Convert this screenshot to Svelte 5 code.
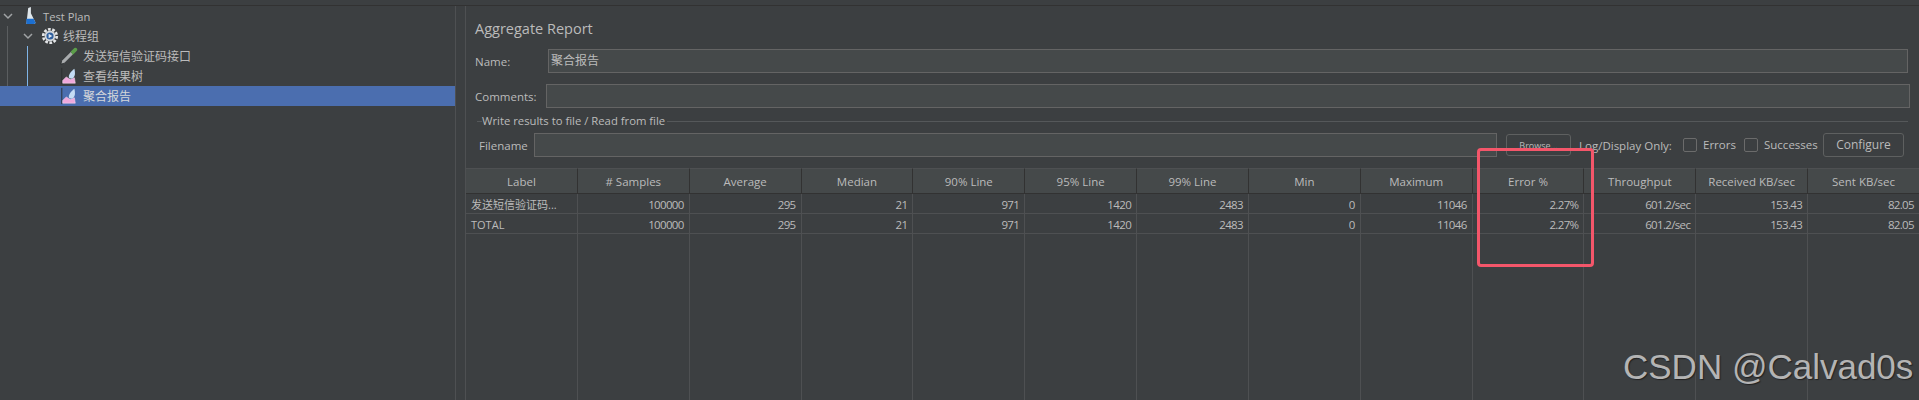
<script>
  const columns = ['Label', '# Samples', 'Average', 'Median', '90% Line', '95% Line', '99% Line', 'Min', 'Maximum', 'Error %', 'Throughput', 'Received KB/sec', 'Sent KB/sec']
  const rows = [
    ['发送短信验证码...', '100000', '295', '21', '971', '1420', '2483', '0', '11046', '2.27%', '601.2/sec', '153.43', '82.05'],
    ['TOTAL', '100000', '295', '21', '971', '1420', '2483', '0', '11046', '2.27%', '601.2/sec', '153.43', '82.05']
  ]
  const blank = Array(13).fill('')
</script>

<div class="app">
  <div class="topline"></div>
  <div class="main">
    <aside class="tree">
      <div class="guide g1"></div>
      <div class="guide g2"></div>
      <div class="node root">
        <svg class="chev" viewBox="0 0 10 10"><path d="M1 3l4 4 4-4" /></svg>
        <svg class="icon" viewBox="0 0 16 20">
          <path d="M6 1l3-1v7l5 10q.5 2-2 2H4q-2.500-2-2L6 7z" fill="#dfe6ea" />
          <path d="M4 13h8l2 4q.5 2-2 2H4q-2.500-2-2z" fill="#1c6fd0" />
        </svg>
        <span class="latin">Test Plan</span>
      </div>
      <div class="node lvl1">
        <svg class="chev" viewBox="0 0 10 10"><path d="M1 3l4 4 4-4" /></svg>
        <svg class="icon gear" viewBox="0 0 20 20">
          <circle cx="10" cy="10" r="7.500" fill="none" stroke="#e4e6e8" stroke-width="3" stroke-dasharray="3 1.700" />
          <circle cx="10" cy="10" r="6" fill="#d4d8dc" />
          <circle cx="10" cy="10" r="4" fill="#2f5f9e" />
          <path d="M8.500 7.500l4 2.500-4 2.500z" fill="#dfe8f2" />
        </svg>
        <span>线程组</span>
      </div>
      <div class="node lvl2">
        <svg class="icon" viewBox="0 0 20 20">
          <path d="M1 19l1-4L12 5l3 3L5 18z" fill="#a9acae" stroke="#26282a" stroke-width=".8" />
          <path d="M12 5l4-4q2-.500 3 1t-1 3l-4 4z" fill="#5c9e4a" />
        </svg>
        <span>发送短信验证码接口</span>
      </div>
      <div class="node lvl2">
        <svg class="icon" viewBox="0 0 20 20">
          <path d="M2 1v18" stroke="#2a2c2e" fill="none" />
          <path d="M3 18v-3l4-4 3 2 2 1 4-2 1 6z" fill="#f0a8dc" stroke="#f8d8ee" stroke-width=".6" />
          <path d="M10 12c-1-3 2-7 6-10 1 4 1 8-1 10-2 1.500-4 1-5 0z" fill="#c4dcf5" />
        </svg>
        <span>查看结果树</span>
      </div>
      <div class="node lvl2 selected">
        <svg class="icon" viewBox="0 0 20 20">
          <path d="M2 1v18" stroke="#2a2c2e" fill="none" />
          <path d="M3 18v-3l4-4 3 2 2 1 4-2 1 6z" fill="#f0a8dc" stroke="#f8d8ee" stroke-width=".6" />
          <path d="M10 12c-1-3 2-7 6-10 1 4 1 8-1 10-2 1.500-4 1-5 0z" fill="#c4dcf5" />
        </svg>
        <span>聚合报告</span>
      </div>
    </aside>

    <section class="panel">
      <h1>Aggregate Report</h1>
      <div class="field name">
        <label for="name">Name:</label>
        <div id="name" class="input">聚合报告</div>
      </div>
      <div class="field comments">
        <label for="comments">Comments:</label>
        <div id="comments" class="input"></div>
      </div>
      <div class="legend"><span>Write results to file / Read from file</span></div>
      <div class="filebar">
        <label for="file">Filename</label>
        <div id="file" class="input"></div>
        <div class="btn browse">Browse...</div>
        <span class="log">Log/Display Only:</span>
        <span class="check"></span><span class="chk-label errors">Errors</span>
        <span class="check"></span><span class="chk-label successes">Successes</span>
        <div class="btn configure">Configure</div>
      </div>

      <div class="table">
        {#each columns as c}
          <div class="th">{c}</div>
        {/each}
        {#each rows as row}
          {#each row as v, i}
            <div class="td" class:first={i === 0}>{v}</div>
          {/each}
        {/each}
        {#each blank as _}
          <div class="filler"></div>
        {/each}
      </div>
    </section>
  </div>

  <div class="marker"></div>
  <div class="watermark">CSDN @Calvad0s</div>
</div>

<style>
  :global(body) {
    margin: 0;
    background: #3c3f41;
  }

  .app {
    position: relative;
    width: 1919px;
    height: 400px;
    overflow: hidden;
    background: #3c3f41;
    color: #bbbbbb;
    font: 11.500px "Open Sans", "Noto Sans CJK SC", sans-serif;
  }

  .topline {
    height: 5px;
    border-bottom: 1px solid #323232;
  }

  .main {
    display: flex;
    height: 394px;
  }

  .tree {
    position: relative;
    width: 455px;
    flex: none;
    border-right: 1px solid #4e5052;
  }

  .guide {
    position: absolute;
    width: 1px;
  }

  .g1 {
    left: 7px;
    top: 20px;
    height: 80px;
    background: #5b5e60;
  }

  .g2 {
    left: 27px;
    top: 40px;
    height: 60px;
    background: #7fb4e6;
  }

  .node {
    display: flex;
    align-items: center;
    height: 20px;
    font-size: 12px;
  }

  .node span {
    margin-left: 5px;
  }

  .node .latin {
    font-size: 11.200px;
    margin-left: 4px;
  }

  .root {
    padding-left: 3px;
  }

  .root .chev {
    margin-right: 8px;
  }

  .lvl1 {
    padding-left: 23px;
  }

  .lvl1 .chev {
    margin-right: 8px;
  }

  .lvl1 span {
    margin-left: 4px;
  }

  .lvl2 {
    padding-left: 60px;
  }

  .selected {
    position: relative;
    background: #4b6eaf;
    color: #d4d7da;
  }

  .chev {
    width: 10px;
    height: 10px;
  }

  .chev path {
    fill: none;
    stroke: #a0a3a5;
    stroke-width: 1.500;
  }

  .icon {
    width: 18px;
    height: 18px;
    flex: none;
  }

  .panel {
    flex: 1;
    margin-left: 9px;
    border-left: 1px solid #4e5052;
    min-width: 0;
  }

  h1 {
    margin: 13px 0 0 9px;
    font-size: 14.500px;
    font-weight: 400;
    line-height: 20px;
    height: 20px;
  }

  .field {
    display: flex;
    align-items: center;
    padding-left: 9px;
  }

  .field label {
    flex: none;
  }

  .name {
    margin-top: 10px;
    padding-right: 11px;
  }

  .name label {
    width: 73px;
  }

  .comments {
    margin-top: 11px;
    padding-right: 9px;
  }

  .comments label {
    width: 71px;
  }

  .input {
    flex: 1;
    height: 24px;
    box-sizing: border-box;
    border: 1px solid #646464;
    background: #45494a;
    padding: 0 2px;
    line-height: 22px;
    font-size: 12px;
  }

  .legend {
    position: relative;
    margin: 5px 11px 0 11px;
    height: 16px;
    line-height: 16px;
    font-size: 11.300px;
  }

  .legend::before {
    content: "";
    position: absolute;
    left: 0;
    right: 0;
    top: 8px;
    border-top: 1px solid #55585a;
  }

  .legend span {
    position: relative;
    margin-left: 5px;
    padding-right: 2px;
    background: #3c3f41;
  }

  .filebar {
    display: flex;
    align-items: center;
    margin-top: 4px;
    padding-left: 13px;
    height: 24px;
    white-space: nowrap;
  }

  .filebar label {
    width: 55px;
    flex: none;
  }

  .filebar .input {
    flex: none;
    width: 963px;
  }

  .btn {
    box-sizing: border-box;
    border: 1px solid #5e6060;
    border-radius: 3px;
    background: #3c3f41;
    text-align: center;
    flex: none;
  }

  .browse {
    width: 65px;
    height: 22px;
    line-height: 21px;
    font-size: 9px;
    margin-left: 9px;
  }

  .log {
    margin-left: 8px;
    width: 92px;
    flex: none;
  }

  .check {
    box-sizing: border-box;
    width: 14px;
    height: 14px;
    border: 1px solid #6b6b6b;
    border-radius: 2px;
    margin-left: 12px;
    flex: none;
  }

  .errors + .check {
    margin-left: 11px;
  }

  .chk-label {
    margin-left: 6px;
    position: relative;
    top: -1px;
    flex: none;
  }

  .errors {
    width: 30px;
  }

  .successes {
    width: 52px;
  }

  .configure {
    width: 81px;
    height: 24px;
    line-height: 22px;
    margin-left: 7px;
    font-size: 12px;
  }

  .table {
    display: grid;
    grid-template-columns: repeat(13, 111.850px);
    grid-template-rows: 26px 20px 20px 1fr;
    margin-top: 11px;
    width: 1454px;
    height: 232px;
  }

  .th {
    background: #45494a;
    box-sizing: border-box;
    border-top: 1px solid #4e5052;
    border-right: 1px solid #323232;
    border-bottom: 1px solid #323232;
    text-align: center;
    line-height: 25px;
    white-space: nowrap;
  }

  .td {
    box-sizing: border-box;
    border-right: 1px solid #4e5052;
    border-bottom: 1px solid #4e5052;
    text-align: right;
    padding-right: 5px;
    font-size: 11.500px;
    letter-spacing: -0.650px;
    line-height: 21px;
    white-space: nowrap;
  }

  .td.first {
    text-align: left;
    padding-left: 5px;
    padding-right: 0;
    font-size: 11px;
    letter-spacing: 0;
  }

  .filler {
    border-right: 1px solid #4e5052;
  }

  .marker {
    position: absolute;
    left: 1477px;
    top: 148px;
    width: 111px;
    height: 113px;
    border: 3px solid #f4566a;
    border-radius: 4px;
  }

  .watermark {
    position: absolute;
    left: 1623px;
    top: 347px;
    font: 35px "Liberation Sans", sans-serif;
    color: #b4b4b4;
    text-shadow: 1px 1px 1px #222;
  }
</style>
